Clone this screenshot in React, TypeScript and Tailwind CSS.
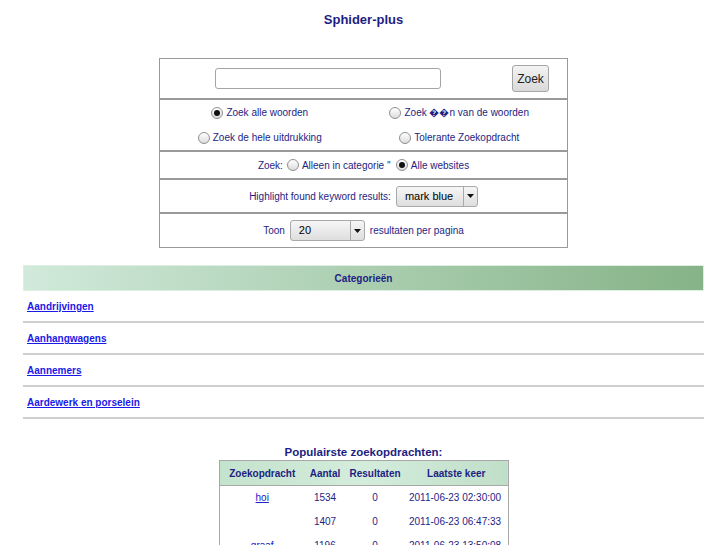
const navy = "text-[#1e1e82]";

function Radio({ checked }: { checked?: boolean }) {
  return (
    <span className="mr-[3px] inline-flex h-[12px] w-[12px] shrink-0 items-center justify-center rounded-full border border-[#8f8f8f] bg-gradient-to-b from-[#ffffff] to-[#dcdcdc]">
      {checked && <span className="h-[6px] w-[6px] rounded-full bg-[#111]" />}
    </span>
  );
}

function Select({ value, width, arrowAt }: { value: string; width: string; arrowAt: string }) {
  return (
    <span
      className={`inline-flex h-[21px] ${width} items-stretch rounded-[3px] border border-[#a9a9a9] bg-gradient-to-b from-[#f6f6f6] to-[#dedede] text-[11px] text-black`}
    >
      <span className={`flex ${arrowAt} items-center pl-[8px]`}>{value}</span>
      <span className="flex flex-1 items-center justify-center border-l border-[#a9a9a9]">
        <svg width="7" height="4" viewBox="0 0 7 4">
          <path d="M0 0h7L3.5 4z" fill="#111" />
        </svg>
      </span>
    </span>
  );
}

const categories = ["Aandrijvingen", "Aanhangwagens", "Aannemers", "Aardewerk en porselein"];

const popular = [
  { q: "hoi", n: "1534", r: "0", t: "2011-06-23 02:30:00" },
  { q: "", n: "1407", r: "0", t: "2011-06-23 06:47:33" },
  { q: "graaf", n: "1196", r: "0", t: "2011-06-23 13:50:08" },
];

export default function App() {
  return (
    <div className={`min-h-[545px] bg-white pb-10 font-['Liberation_Sans',Arial,sans-serif] ${navy}`}>
      <h1 className="pt-[12px] text-center text-[13px] font-bold leading-[16px]">Sphider-plus</h1>

      {/* Search form */}
      <div className="mx-auto mt-[30px] w-[409px] border border-[#9a9a9a] text-[10px]">
        <div className="grid h-[41px] grid-cols-[334px_1fr] items-center border-b-2 border-[#9a9a9a]">
          <div className="flex justify-center pl-[2px]">
            <input className="h-[21px] w-[226px] rounded-[3px] border border-[#a5a5a5] bg-white" />
          </div>
          <div className="flex justify-center">
            <button className="h-[27px] w-[37px] rounded-[3px] border border-[#a5a5a5] bg-gradient-to-b from-[#f4f4f4] to-[#d9d9d9] text-[12px] text-[#222]">
              Zoek
            </button>
          </div>
        </div>

        <div className="grid h-[52px] grid-cols-2 grid-rows-2 border-b-2 border-[#9a9a9a] pr-[8px]">
          <label className="flex items-center justify-center">
            <Radio checked />
            Zoek alle woorden
          </label>
          <label className="flex items-center justify-center">
            <Radio />
            Zoek ��n van de woorden
          </label>
          <label className="flex items-center justify-center">
            <Radio />
            Zoek de hele uitdrukking
          </label>
          <label className="flex items-center justify-center">
            <Radio />
            Tolerante Zoekopdracht
          </label>
        </div>

        <div className="flex h-[28px] items-center justify-center border-b-2 border-[#9a9a9a]">
          <span className="mr-[4px]">Zoek:</span>
          <Radio />
          <span className="mr-[5px]">Alleen in categorie ''</span>
          <Radio checked />
          Alle websites
        </div>

        <div className="flex h-[34px] items-center justify-center gap-[5px] border-b-2 border-[#9a9a9a]">
          <span>Highlight found keyword results:</span>
          <Select value="mark blue" width="w-[82px]" arrowAt="w-[66px]" />
        </div>

        <div className="flex h-[33px] items-center justify-center gap-[5px]">
          <span>Toon</span>
          <Select value="20" width="w-[75px]" arrowAt="w-[59px]" />
          <span>resultaten per pagina</span>
        </div>
      </div>

      {/* Categories */}
      <div className="mx-[23px] mt-[17px]">
        <div className="flex h-[26px] items-center justify-center border border-[#dcefe2] bg-gradient-to-r from-[#d1eadb] to-[#86b387] text-[10px] font-bold">
          Categorieën
        </div>
        {categories.map((c) => (
          <div key={c} className="flex h-[32px] items-center border-b-2 border-[#cfcfcf] pl-[4px] pt-[1px]">
            <a href="#" className="text-[10px] font-bold text-[#1a1ae6] underline">
              {c}
            </a>
          </div>
        ))}
      </div>

      {/* Popular searches */}
      <div className="mt-[26px] flex flex-col items-center">
        <h2 className="text-[11.5px] font-bold leading-[14px]">Populairste zoekopdrachten:</h2>
        <table className="mt-[1px] w-[290px] border-collapse text-[10px]">
          <thead>
            <tr className="h-[25px] border border-[#a8a8a8] bg-gradient-to-r from-[#c4e3cd] via-[#d4ecdc] to-[#c0dfc9] font-bold">
              <th className="w-[86px]">Zoekopdracht</th>
              <th className="w-[40px]">Aantal</th>
              <th className="w-[60px]">Resultaten</th>
              <th>Laatste keer</th>
            </tr>
          </thead>
          <tbody>
            {popular.map((p) => (
              <tr key={p.t} className="h-[24px] border-x border-[#a8a8a8] text-center">
                <td>
                  {p.q && (
                    <a href="#" className="text-[#2020c8] underline">
                      {p.q}
                    </a>
                  )}
                </td>
                <td>{p.n}</td>
                <td>{p.r}</td>
                <td className="pl-[4px] text-left">{p.t}</td>
              </tr>
            ))}
          </tbody>
        </table>
      </div>
    </div>
  );
}
